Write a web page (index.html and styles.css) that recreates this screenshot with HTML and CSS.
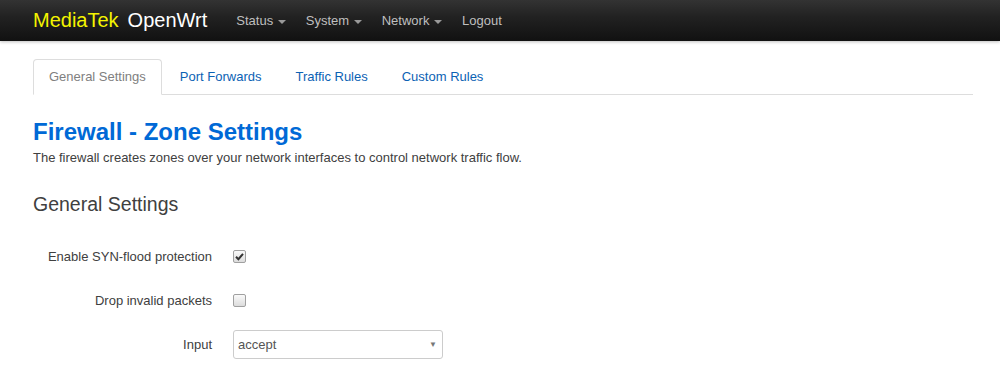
FILE: index.html
```html
<!DOCTYPE html>
<html lang="en">
<head>
    <meta charset="UTF-8">
    <title>MediaTek OpenWrt - Firewall</title>
    <link rel="stylesheet" href="styles.css">
</head>
<body>
    <div class="navbar">
        <div class="nav-inner">
            <a class="brand" href="#"><span class="brand-vendor">MediaTek</span><span class="brand-name">OpenWrt</span></a>
            <ul class="nav">
                <li><a href="#">Status <span class="caret"></span></a></li>
                <li><a href="#">System <span class="caret"></span></a></li>
                <li><a href="#">Network <span class="caret"></span></a></li>
                <li><a href="#">Logout</a></li>
            </ul>
        </div>
    </div>

    <div class="container">
        <ul class="tabs">
            <li class="active"><a href="#">General Settings</a></li>
            <li><a href="#">Port Forwards</a></li>
            <li><a href="#">Traffic Rules</a></li>
            <li><a href="#">Custom Rules</a></li>
        </ul>

        <h2 class="page-title">Firewall - Zone Settings</h2>
        <p class="page-desc">The firewall creates zones over your network interfaces to control network traffic flow.</p>

        <fieldset class="section">
            <legend>General Settings</legend>

            <div class="form-row">
                <label class="form-label">Enable SYN-flood protection</label>
                <div class="form-field">
                    <span class="checkbox checked">
                        <svg width="9" height="9" viewBox="0 0 9 9"><path d="M1 4.8 L3.4 7.2 L8 1.8" fill="none" stroke="#333" stroke-width="2"/></svg>
                    </span>
                </div>
            </div>
            <div class="form-row">
                <label class="form-label">Drop invalid packets</label>
                <div class="form-field"><span class="checkbox"></span></div>
            </div>
            <div class="form-row">
                <label class="form-label">Input</label>
                <div class="form-field">
                    <div class="select">
                        <span>accept</span>
                        <span class="select-arrow">&#9660;</span>
                    </div>
                </div>
            </div>
        </fieldset>
    </div>
</body>
</html>
```

FILE: styles.css
```css
* {
    margin: 0;
    padding: 0;
    box-sizing: border-box;
}

body {
    font-family: 'Liberation Sans', Arial, sans-serif;
    font-size: 13px;
    color: #404040;
    background-color: #fff;
    overflow: hidden;
}

a {
    text-decoration: none;
}

/* top bar */
.navbar {
    height: 41px;
    background-color: #222;
    background-image: linear-gradient(to bottom, #333, #222 40%, #111);
    box-shadow: 0 1px 3px rgba(0, 0, 0, 0.25);
}

.nav-inner {
    display: flex;
    align-items: center;
    height: 41px;
    padding-left: 33px;
}

.brand {
    font-size: 20px;
    color: #fff;
    margin-right: 19px;
    margin-top: -1px;
}

.brand-vendor {
    color: #f4f400;
    margin-right: 9px;
}

.nav {
    display: flex;
    list-style: none;
}

.nav a {
    display: block;
    color: #bfbfbf;
    font-size: 13px;
    padding: 0 10px;
    line-height: 41px;
}

.caret {
    display: inline-block;
    width: 0;
    height: 0;
    margin-left: 1px;
    vertical-align: middle;
    border-top: 4px solid #999;
    border-left: 4px solid transparent;
    border-right: 4px solid transparent;
}

/* page */
.container {
    width: 940px;
    margin-left: 33px;
    padding-top: 18px;
}

.tabs {
    display: flex;
    list-style: none;
    border-bottom: 1px solid #ddd;
    height: 36px;
}

.tabs li {
    margin-bottom: -1px;
    margin-right: 2px;
}

.tabs a {
    display: block;
    height: 36px;
    line-height: 34px;
    padding: 0 15px;
    color: #0b62b4;
    border: 1px solid transparent;
    border-radius: 4px 4px 0 0;
}

.tabs li.active a {
    color: #808080;
    background-color: #fff;
    border-color: #ddd #ddd transparent;
}

.page-title {
    color: #0069d6;
    font-size: 24px;
    font-weight: bold;
    margin-top: 23px;
    line-height: 28px;
}

.page-desc {
    font-size: 13px;
    color: #404040;
    margin-top: 4px;
    line-height: 16px;
}

.section {
    border: none;
    margin-top: 23px;
}

.section legend {
    font-size: 19.5px;
    color: #404040;
    line-height: 30px;
    padding: 0;
    margin-bottom: 22px;
}

.form-row {
    display: flex;
    align-items: center;
    min-height: 30px;
    margin-bottom: 14px;
}

.form-label {
    flex: 0 0 200px;
    text-align: right;
    padding-right: 21px;
    font-size: 13px;
    color: #404040;
}

.checkbox {
    display: flex;
    align-items: center;
    justify-content: center;
    width: 13px;
    height: 13px;
    border: 1px solid #a0a0a0;
    border-radius: 2px;
    background-image: linear-gradient(to bottom, #fafafa, #dcdcdc);
}

.select {
    display: flex;
    align-items: center;
    justify-content: space-between;
    width: 210px;
    height: 29px;
    padding: 0 5px 0 4px;
    border: 1px solid #ccc;
    border-radius: 3px;
    color: #555;
    font-size: 13px;
}

.select-arrow {
    font-size: 8px;
    color: #777;
}
```
